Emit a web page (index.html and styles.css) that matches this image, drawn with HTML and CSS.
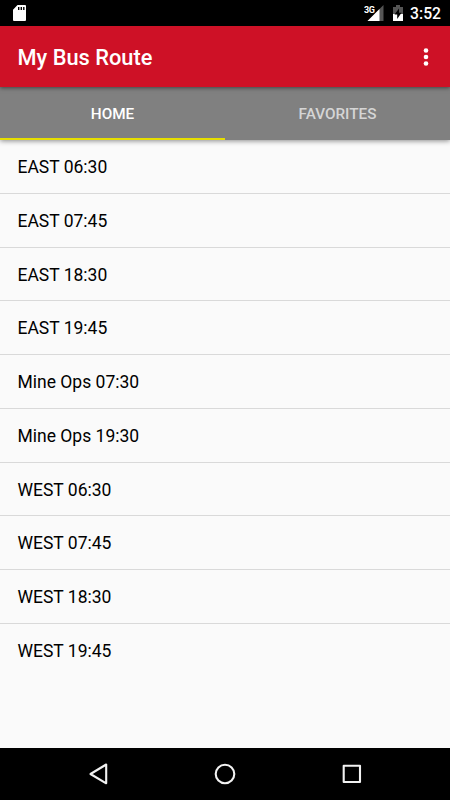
FILE: index.html
```html
<!DOCTYPE html>
<html lang="en">
<head>
<meta charset="utf-8">
<title>My Bus Route</title>
<link rel="stylesheet" href="styles.css">
</head>
<body>
<div class="screen">
  <div class="status">
    <svg class="sd" width="13" height="16" viewBox="0 0 13 16"><path fill="#fff" fill-rule="evenodd" d="M4.500 0H12q1 0 1 1v14q0 1-1 1H1q-1 0-1-1V4.700zM5 2v3h1.400V2zM7.600 2v3H9V2zM10.100 2v3h1.400V2z"/></svg>
    <svg class="signal" width="20" height="18" viewBox="0 0 20 18"><path fill="#555" d="M19.500 1v16h-16z"/><path fill="#fff" d="M15.500 5v12h-12z"/><path fill="#000" d="M0 0h10.500v8.500H0z"/><text class="network" x="0" y="8.500">3G</text></svg>
    <svg class="battery" width="10" height="16" viewBox="0 0 10 16"><path fill="#555" d="M3 0h4v2h3v7H0V2h3z"/><path fill="#fff" d="M0 9h10v7H0z"/><path fill="#000" d="M6 3.500v4.200h2.500L4.200 14V9.500H1.500z"/></svg>
    <span class="clock">3:52</span>
  </div>
  <header class="appbar">
    <h1>My Bus Route</h1>
    <svg width="6" height="20" viewBox="0 0 6 20"><g fill="#fff"><circle cx="3" cy="3.500" r="2.300"/><circle cx="3" cy="10" r="2.300"/><circle cx="3" cy="16.500" r="2.300"/></g></svg>
  </header>
  <nav class="tabs">
    <div class="tab active">HOME</div>
    <div class="tab">FAVORITES</div>
  </nav>
  <ul class="routes">
    <li>EAST 06:30</li>
    <li>EAST 07:45</li>
    <li>EAST 18:30</li>
    <li>EAST 19:45</li>
    <li>Mine Ops 07:30</li>
    <li>Mine Ops 19:30</li>
    <li>WEST 06:30</li>
    <li>WEST 07:45</li>
    <li>WEST 18:30</li>
    <li>WEST 19:45</li>
  </ul>
  <footer class="navbar">
    <svg width="20" height="22" viewBox="0 0 20 22"><path d="M17.200 1.500v18.800L1.500 11z"/></svg>
    <svg width="22" height="22" viewBox="0 0 22 22"><circle cx="11" cy="11" r="9.300"/></svg>
    <svg width="20" height="20" viewBox="0 0 20 20"><path d="M1.700 1.700h16.300v16.300H1.700z"/></svg>
  </footer>
</div>
</body>
</html>
```
FILE: styles.css
```css
* { box-sizing: border-box; }
body { margin: 0; font-family: Roboto, sans-serif; }
.screen {
  width: 450px;
  height: 800px;
  display: flex;
  flex-direction: column;
  background: #fafafa;
  overflow: hidden;
}
.status {
  flex: none;
  height: 26px;
  display: flex;
  align-items: center;
  padding: 0 9px 0 13px;
  background: #000;
  color: #fff;
}
.signal { margin-left: auto; }
.network { font-size: 9px; font-weight: 700; fill: #fff; letter-spacing: -0.5px; }
.battery { margin-left: 9px; }
.clock { margin-left: 7px; font-size: 15.700px; font-weight: 500; line-height: 26px; padding-top: 2px; }
.appbar {
  flex: none;
  position: relative;
  z-index: 2;
  height: 61px;
  display: flex;
  align-items: center;
  justify-content: space-between;
  padding: 0 21px 0 17.500px;
  background: #ce1126;
  box-shadow: 0 1px 4px rgba(0, 0, 0, 0.5);
}
h1 { margin: 0; padding-top: 2px; color: #fff; font-size: 21.800px; font-weight: 500; line-height: 26px; }
.tabs {
  flex: none;
  position: relative;
  z-index: 1;
  height: 53px;
  display: flex;
  background: #808080;
  box-shadow: 0 1px 5px rgba(0, 0, 0, 0.45);
}
.tab {
  flex: 1;
  font-size: 15.300px;
  font-weight: 500;
  line-height: 54px;
  text-align: center;
  color: #d5d5d5;
}
.tab.active { color: #fff; border-bottom: 2px solid #e6de00; }
.routes { flex: 1; margin: 0; padding: 0; list-style: none; }
.routes li {
  height: 53.750px;
  padding-left: 17.500px;
  border-bottom: 1px solid #d9d9d9;
  color: #000;
  font-size: 17.500px;
  line-height: 54.500px;
}
.routes li:last-child { border-bottom: 0; }
.navbar {
  flex: none;
  height: 52px;
  display: flex;
  align-items: center;
  justify-content: space-between;
  padding: 0 88.500px 0 89px;
  background: #000;
}
.navbar svg { fill: none; stroke: #f2f2f2; stroke-width: 2.100; stroke-linejoin: round; }
```
